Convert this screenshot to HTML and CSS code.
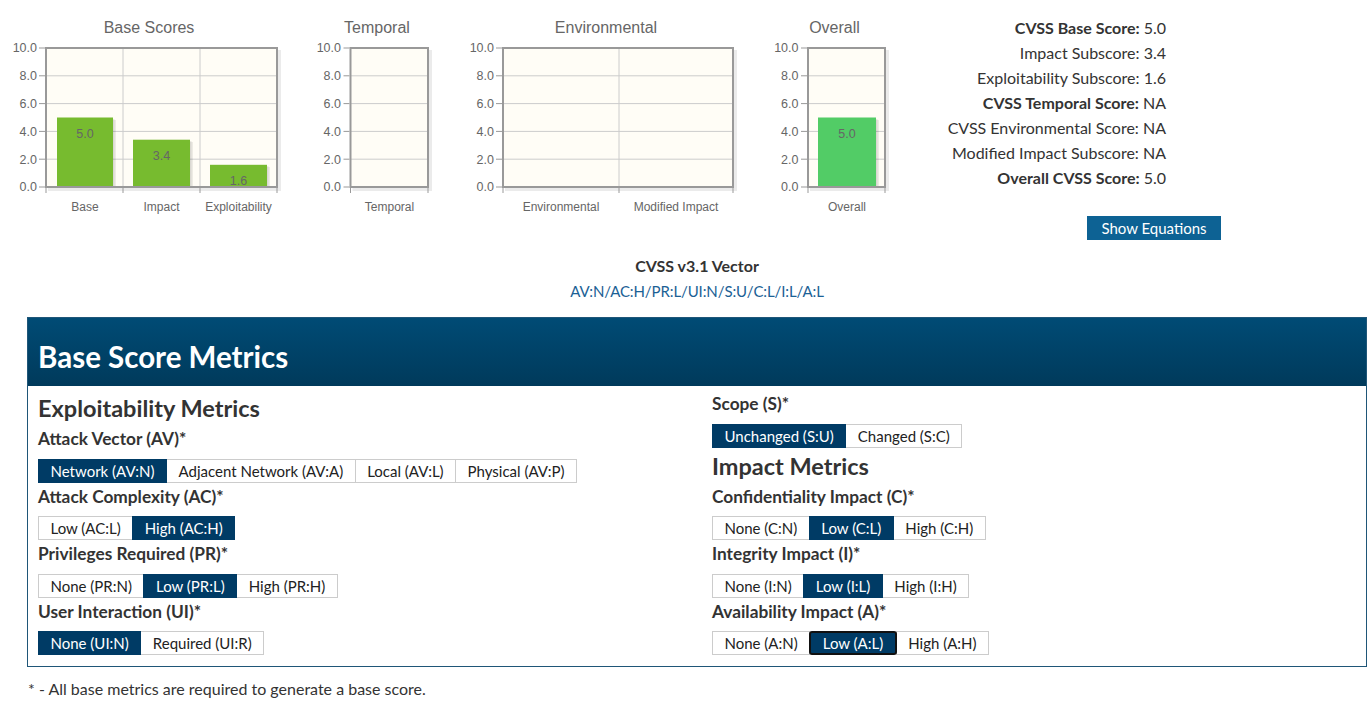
FILE: index.html
```html
<!DOCTYPE html>
<html>
<head>
<meta charset="utf-8">
<title>CVSS v3.1 Calculator</title>
<link rel="stylesheet" href="styles.css">
</head>
<body>
<div class="top">
  <div class="charts">
    <svg class="chart" width="290" height="220" viewBox="0 0 290 220">
      <text class="ctitle" x="149" y="33">Base Scores</text>
      <rect class="pbg" x="46" y="48" width="231" height="139"/>
      <g class="grid">
        <line x1="46" x2="277" y1="75.8" y2="75.8"/><line x1="46" x2="277" y1="103.6" y2="103.6"/>
        <line x1="46" x2="277" y1="131.4" y2="131.4"/><line x1="46" x2="277" y1="159.2" y2="159.2"/>
        <line x1="123" x2="123" y1="48" y2="187"/><line x1="200" x2="200" y1="48" y2="187"/>
      </g>
      <rect class="bshadow" x="60" y="120" width="56" height="67"/>
      <rect class="bshadow2" x="58.5" y="119" width="56" height="68"/>
      <rect class="bar" x="57" y="117.5" width="56" height="69.5"/>
      <rect class="bshadow" x="136" y="142" width="57" height="45"/>
      <rect class="bshadow2" x="134.5" y="141" width="57" height="46"/>
      <rect class="bar" x="133" y="139.7" width="57" height="47.3"/>
      <rect class="bshadow" x="213" y="167" width="57" height="20"/>
      <rect class="bshadow2" x="211.5" y="166" width="57" height="21"/>
      <rect class="bar" x="210" y="164.8" width="57" height="22.2"/>
      <text class="blabel" x="85" y="138">5.0</text>
      <text class="blabel" x="161.5" y="160">3.4</text>
      <text class="blabel" x="238.5" y="185">1.6</text>
      <path class="frameshadow" d="M279.5 50 V189.5 H48"/>
      <rect class="frame" x="46" y="48" width="231" height="139"/>
      <g class="ticks">
        <line x1="39" x2="45" y1="48" y2="48"/><line x1="39" x2="45" y1="75.8" y2="75.8"/><line x1="39" x2="45" y1="103.6" y2="103.6"/>
        <line x1="39" x2="45" y1="131.4" y2="131.4"/><line x1="39" x2="45" y1="159.2" y2="159.2"/><line x1="39" x2="45" y1="187" y2="187"/>
        <line x1="46" x2="46" y1="188" y2="193"/><line x1="123" x2="123" y1="188" y2="193"/><line x1="200" x2="200" y1="188" y2="193"/><line x1="277" x2="277" y1="188" y2="193"/>
      </g>
      <g class="ylab">
        <text x="37" y="52">10.0</text><text x="37" y="80">8.0</text><text x="37" y="108">6.0</text>
        <text x="37" y="135.5">4.0</text><text x="37" y="163.5">2.0</text><text x="37" y="191">0.0</text>
      </g>
      <g class="xlab">
        <text x="85" y="211">Base</text><text x="161.5" y="211">Impact</text><text x="238.5" y="211">Exploitability</text>
      </g>
    </svg>
    <svg class="chart" width="150" height="220" viewBox="0 0 150 220">
      <text class="ctitle" x="87" y="33">Temporal</text>
      <rect class="pbg" x="60.5" y="48" width="77.5" height="139"/>
      <g class="grid">
        <line x1="60.5" x2="138" y1="75.8" y2="75.8"/><line x1="60.5" x2="138" y1="103.6" y2="103.6"/>
        <line x1="60.5" x2="138" y1="131.4" y2="131.4"/><line x1="60.5" x2="138" y1="159.2" y2="159.2"/>
      </g>
      <path class="frameshadow" d="M140.5 50 V189.5 H62.5"/>
      <rect class="frame" x="60.5" y="48" width="77.5" height="139"/>
      <g class="ticks">
        <line x1="53.5" x2="59.5" y1="48" y2="48"/><line x1="53.5" x2="59.5" y1="75.8" y2="75.8"/><line x1="53.5" x2="59.5" y1="103.6" y2="103.6"/>
        <line x1="53.5" x2="59.5" y1="131.4" y2="131.4"/><line x1="53.5" x2="59.5" y1="159.2" y2="159.2"/><line x1="53.5" x2="59.5" y1="187" y2="187"/>
        <line x1="60.5" x2="60.5" y1="188" y2="193"/><line x1="138" x2="138" y1="188" y2="193"/>
      </g>
      <g class="ylab">
        <text x="51" y="52">10.0</text><text x="51" y="80">8.0</text><text x="51" y="108">6.0</text>
        <text x="51" y="135.5">4.0</text><text x="51" y="163.5">2.0</text><text x="51" y="191">0.0</text>
      </g>
      <g class="xlab"><text x="99.5" y="211">Temporal</text></g>
    </svg>
    <svg class="chart" width="300" height="220" viewBox="0 0 300 220">
      <text class="ctitle" x="166" y="33">Environmental</text>
      <rect class="pbg" x="63" y="48" width="230" height="139"/>
      <g class="grid">
        <line x1="63" x2="293" y1="75.8" y2="75.8"/><line x1="63" x2="293" y1="103.6" y2="103.6"/>
        <line x1="63" x2="293" y1="131.4" y2="131.4"/><line x1="63" x2="293" y1="159.2" y2="159.2"/>
        <line x1="179" x2="179" y1="48" y2="187"/>
      </g>
      <path class="frameshadow" d="M295.5 50 V189.5 H65"/>
      <rect class="frame" x="63" y="48" width="230" height="139"/>
      <g class="ticks">
        <line x1="56" x2="62" y1="48" y2="48"/><line x1="56" x2="62" y1="75.8" y2="75.8"/><line x1="56" x2="62" y1="103.6" y2="103.6"/>
        <line x1="56" x2="62" y1="131.4" y2="131.4"/><line x1="56" x2="62" y1="159.2" y2="159.2"/><line x1="56" x2="62" y1="187" y2="187"/>
        <line x1="63" x2="63" y1="188" y2="193"/><line x1="179" x2="179" y1="188" y2="193"/><line x1="293" x2="293" y1="188" y2="193"/>
      </g>
      <g class="ylab">
        <text x="54" y="52">10.0</text><text x="54" y="80">8.0</text><text x="54" y="108">6.0</text>
        <text x="54" y="135.5">4.0</text><text x="54" y="163.5">2.0</text><text x="54" y="191">0.0</text>
      </g>
      <g class="xlab"><text x="121" y="211">Environmental</text><text x="236" y="211">Modified Impact</text></g>
    </svg>
    <svg class="chart" width="170" height="220" viewBox="0 0 170 220">
      <text class="ctitle" x="94.5" y="33">Overall</text>
      <rect class="pbg" x="68" y="48" width="77" height="139"/>
      <g class="grid">
        <line x1="68" x2="145" y1="75.8" y2="75.8"/><line x1="68" x2="145" y1="103.6" y2="103.6"/>
        <line x1="68" x2="145" y1="131.4" y2="131.4"/><line x1="68" x2="145" y1="159.2" y2="159.2"/>
      </g>
      <rect class="bshadow" x="81" y="120" width="58" height="67"/>
      <rect class="bshadow2" x="79.5" y="119" width="58" height="68"/>
      <rect class="bar green" x="78" y="117.5" width="58" height="69.5"/>
      <text class="blabel" x="107" y="138">5.0</text>
      <path class="frameshadow" d="M147.5 50 V189.5 H70"/>
      <rect class="frame" x="68" y="48" width="77" height="139"/>
      <g class="ticks">
        <line x1="61" x2="67" y1="48" y2="48"/><line x1="61" x2="67" y1="75.8" y2="75.8"/><line x1="61" x2="67" y1="103.6" y2="103.6"/>
        <line x1="61" x2="67" y1="131.4" y2="131.4"/><line x1="61" x2="67" y1="159.2" y2="159.2"/><line x1="61" x2="67" y1="187" y2="187"/>
        <line x1="68" x2="68" y1="188" y2="193"/><line x1="145" x2="145" y1="188" y2="193"/>
      </g>
      <g class="ylab">
        <text x="58.5" y="52">10.0</text><text x="58.5" y="80">8.0</text><text x="58.5" y="108">6.0</text>
        <text x="58.5" y="135.5">4.0</text><text x="58.5" y="163.5">2.0</text><text x="58.5" y="191">0.0</text>
      </g>
      <g class="xlab"><text x="107" y="211">Overall</text></g>
    </svg>
  </div>
  <div class="scores">
    <div class="score-lines">
      <div><strong>CVSS Base Score:</strong> 5.0</div>
      <div>Impact Subscore: 3.4</div>
      <div>Exploitability Subscore: 1.6</div>
      <div><strong>CVSS Temporal Score:</strong> NA</div>
      <div>CVSS Environmental Score: NA</div>
      <div>Modified Impact Subscore: NA</div>
      <div><strong>Overall CVSS Score:</strong> 5.0</div>
    </div>
    <button class="eq-btn">Show Equations</button>
  </div>
</div>

<div class="main">
  <div class="vector">
    <div class="vector-title">CVSS v3.1 Vector</div>
    <a class="vector-link" href="#">AV:N/AC:H/PR:L/UI:N/S:U/C:L/I:L/A:L</a>
  </div>

  <div class="panel">
    <div class="panel-head"><h2>Base Score Metrics</h2></div>
    <div class="panel-body">
      <div class="col col-left">
        <h3>Exploitability Metrics</h3>
        <div class="metric">
          <div class="mlabel">Attack Vector (AV)*</div>
          <div class="btn-group">
            <button class="opt sel">Network (AV:N)</button><button class="opt">Adjacent Network (AV:A)</button><button class="opt">Local (AV:L)</button><button class="opt">Physical (AV:P)</button>
          </div>
        </div>
        <div class="metric">
          <div class="mlabel">Attack Complexity (AC)*</div>
          <div class="btn-group">
            <button class="opt">Low (AC:L)</button><button class="opt sel">High (AC:H)</button>
          </div>
        </div>
        <div class="metric">
          <div class="mlabel">Privileges Required (PR)*</div>
          <div class="btn-group">
            <button class="opt">None (PR:N)</button><button class="opt sel">Low (PR:L)</button><button class="opt">High (PR:H)</button>
          </div>
        </div>
        <div class="metric">
          <div class="mlabel">User Interaction (UI)*</div>
          <div class="btn-group">
            <button class="opt sel">None (UI:N)</button><button class="opt">Required (UI:R)</button>
          </div>
        </div>
      </div>
      <div class="col col-right">
        <div class="metric">
          <div class="mlabel">Scope (S)*</div>
          <div class="btn-group">
            <button class="opt sel">Unchanged (S:U)</button><button class="opt">Changed (S:C)</button>
          </div>
        </div>
        <h3 class="h3-impact">Impact Metrics</h3>
        <div class="metric">
          <div class="mlabel">Confidentiality Impact (C)*</div>
          <div class="btn-group">
            <button class="opt">None (C:N)</button><button class="opt sel">Low (C:L)</button><button class="opt">High (C:H)</button>
          </div>
        </div>
        <div class="metric">
          <div class="mlabel">Integrity Impact (I)*</div>
          <div class="btn-group">
            <button class="opt">None (I:N)</button><button class="opt sel">Low (I:L)</button><button class="opt">High (I:H)</button>
          </div>
        </div>
        <div class="metric">
          <div class="mlabel">Availability Impact (A)*</div>
          <div class="btn-group">
            <button class="opt">None (A:N)</button><button class="opt sel focus">Low (A:L)</button><button class="opt">High (A:H)</button>
          </div>
        </div>
      </div>
    </div>
  </div>
  <p class="note">* - All base metrics are required to generate a base score.</p>
</div>
</body>
</html>
```

FILE: styles.css
```css
* { box-sizing: border-box; }
html, body { margin: 0; padding: 0; background: #fff; }
body {
  font-family: "Lato", "Open Sans", sans-serif;
  color: #333;
  font-size: 16px;
  width: 1368px;
}

.top { display: flex; height: 255px; }
.charts { display: flex; width: 910px; }
.chart { display: block; font-family: "Liberation Sans", Arial, sans-serif; }
.ctitle { font-size: 16px; fill: #666; text-anchor: middle; }
.pbg { fill: #fffdf6; }
.grid line { stroke: #cccccc; stroke-width: 1; }
.frame { fill: none; stroke: #999; stroke-width: 2; }
.frameshadow { fill: none; stroke: rgba(0,0,0,0.08); stroke-width: 3; }
.bar { fill: #77bb2f; }
.bar.green { fill: #52cc66; }
.bshadow { fill: rgba(0,0,0,0.07); }
.bshadow2 { fill: rgba(0,0,0,0.08); }
.blabel { font-size: 12.5px; fill: #666; text-anchor: middle; }
.ticks line { stroke: #999; stroke-width: 1; }
.ylab text { font-size: 12.5px; fill: #666; text-anchor: end; }
.xlab text { font-size: 12px; fill: #666; text-anchor: middle; }

.scores { width: 311px; display: flex; flex-direction: column; padding-top: 15px; }
.score-lines { text-align: right; padding-right: 55px; line-height: 25px; font-size: 16px; }
.score-lines strong { font-weight: 700; }
.eq-btn {
  align-self: flex-end;
  margin-top: 26px;
  width: 134px; height: 24px;
  background: #0d6294; color: #fff; border: 0;
  font-family: inherit; font-size: 15px; padding: 0;
}

.main { margin-left: 27px; width: 1340px; }
.vector { text-align: center; }
.vector-title { font-weight: 700; line-height: 22px; font-size: 16px; }
.vector-link { display: inline-block; margin-top: 3px; line-height: 22px; color: #1b6195; text-decoration: none; font-size: 15px; letter-spacing: -0.1px; }

.panel { margin-top: 15px; border: 1px solid #1f5678; }
.panel-head {
  height: 68px;
  background: linear-gradient(#004b75, #003a5b);
  display: flex; align-items: center;
  padding-left: 10px;
}
.panel-head h2 { margin: 0; color: #fff; font-size: 29.5px; font-weight: 700; padding-top: 8px; }
.panel-body { display: grid; grid-template-columns: 1fr 1fr; padding-bottom: 11px; }
.col-left { padding: 9px 0 0 10px; }
.col-right { padding: 7px 0 0 15px; }
h3 { margin: 0 0 7px; font-size: 23.5px; line-height: 26px; font-weight: 700; color: #333; }
.h3-impact { margin-top: 5px; }
.metric + .metric { margin-top: 3px; }
.mlabel { font-weight: 700; font-size: 17.3px; line-height: 22px; margin-bottom: 8.5px; }
.btn-group { display: flex; }
.opt {
  height: 24px; line-height: 22px;
  padding: 0 11.5px;
  border: 1px solid #ccc;
  background: #fff; color: #222;
  font-family: inherit; font-size: 15px;
  margin: 0;
}
.opt + .opt { margin-left: -1px; }
.opt.sel { background: #003b65; color: #fff; border-color: #003b65; position: relative; }
.opt.focus { border: 2px solid #111; border-radius: 3px; line-height: 20px; }
.note { margin: 11px 0 0 1px; font-size: 16px; line-height: 22px; }
```
